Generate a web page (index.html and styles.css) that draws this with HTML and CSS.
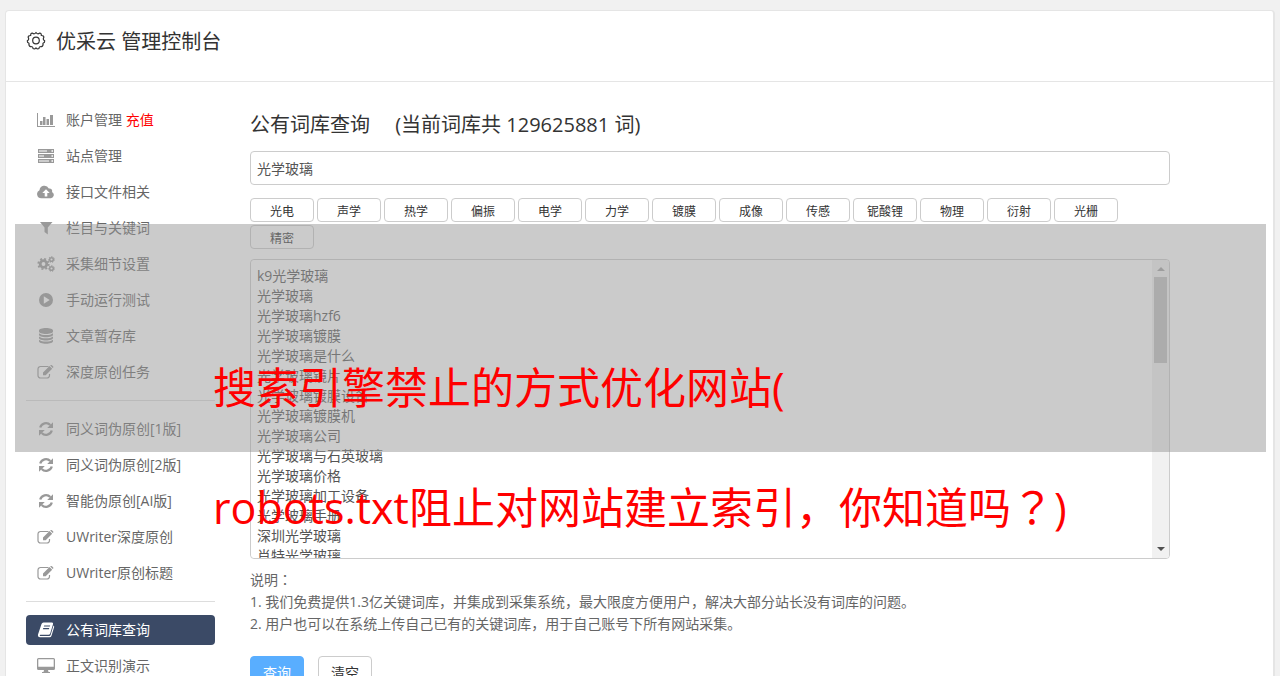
FILE: index.html
```html
<!DOCTYPE html>
<html lang="zh-CN">

<head>
    <meta charset="UTF-8">
    <meta name="viewport" content="width=device-width, initial-scale=1.0">
    <title>优采云 管理控制台</title>
    <link rel="stylesheet" href="styles.css">
</head>

<body>
    <!-- 图标 -->
    <svg class="sprite" width="0" height="0">
        <symbol id="i-chart" viewBox="0 0 18 14">
            <path d="M0 0h1v13h17v1H0zM3 8h2.500v4H3zM6 4h2.500v8H6zM9.500 6H12v6H9.500zM13 2h3v10h-3z" />
        </symbol>
        <symbol id="i-server" viewBox="0 0 18 14">
            <path fill-rule="evenodd" d="M1 0h16v4H1zM1 5h16v4H1zM1 10h16v4H1zM2 1.500v1h8v-1zM2 6.500v1h5v-1zM2 11.500v1h10v-1zM14.500 1.300v1.400h1.500V1.300zM14.500 6.300v1.400h1.500V6.300zM14.500 11.300v1.400h1.500v-1.400z" />
        </symbol>
        <symbol id="i-cloud" viewBox="0 0 18 14">
            <path fill-rule="evenodd" d="M4.300 13.200A4.200 4.200 0 0 1 2.500 5.200 4.900 4.900 0 0 1 11.800 3.600 2.600 2.600 0 0 1 15 7a3.300 3.300 0 0 1-1 6.200zM9 4.200 5.300 8h2.400v3.600h2.600V8h2.400z" />
        </symbol>
        <symbol id="i-filter" viewBox="0 0 18 14">
            <path d="M3 1h12.500L10.800 6.500V13.500L7.500 11V6.500z" />
        </symbol>
        <symbol id="i-cogs" viewBox="0 0 18 16">
            <circle cx="6.500" cy="8" r="3.300" fill="none" stroke="currentColor" stroke-width="2.800" />
            <circle cx="6.500" cy="8" r="5.200" fill="none" stroke="currentColor" stroke-width="1.800" stroke-dasharray="2 2.084" />
            <circle cx="14.500" cy="3.500" r="1.800" fill="none" stroke="currentColor" stroke-width="1.500" />
            <circle cx="14.500" cy="3.500" r="2.900" fill="none" stroke="currentColor" stroke-width="1" stroke-dasharray="1.300 1.300" />
            <circle cx="14.500" cy="12.500" r="1.800" fill="none" stroke="currentColor" stroke-width="1.500" />
            <circle cx="14.500" cy="12.500" r="2.900" fill="none" stroke="currentColor" stroke-width="1" stroke-dasharray="1.300 1.300" />
        </symbol>
        <symbol id="i-play" viewBox="0 0 18 14">
            <path fill-rule="evenodd" d="M9 0a7 7 0 1 1 0 14A7 7 0 0 1 9 0zM6.800 3.300v7.400L12.700 7z" />
        </symbol>
        <symbol id="i-database" viewBox="0 0 18 16">
            <path d="M2 2.500C2 1 5 0 9 0s7 1 7 2.500v1C16 5 13 6 9 6S2 5 2 3.500zM2 5.200C3.500 6.500 6 7 9 7s5.500-.5 7-1.800v1.500C16 8.200 13 9.200 9 9.200S2 8.200 2 6.700zM2 8.500c1.500 1.300 4 1.800 7 1.800s5.500-.5 7-1.800V10c0 1.500-3 2.500-7 2.500S2 11.500 2 10zM2 11.800c1.500 1.300 4 1.800 7 1.800s5.500-.5 7-1.800v1.500c0 1.500-3 2.500-7 2.500s-7-1-7-2.500z" />
        </symbol>
        <symbol id="i-edit" viewBox="0 0 18 14">
            <path d="M11.500 1.500H3.500A2.500 2.500 0 0 0 1 4v6.500A2.500 2.500 0 0 0 3.500 13H10a2.500 2.500 0 0 0 2.500-2.500V9" fill="none" stroke="currentColor" stroke-width="1.200" />
            <path d="M6 7.500 12.500 1l2.700 2.700-6.500 6.500H6zM13.200.6l.6-.5q.6-.4 1.200.1l1.200 1.200q.5.6 0 1.200l-.5.500z" />
        </symbol>
        <symbol id="i-refresh" viewBox="0 0 18 14">
            <path d="M3.200 5.500A6 6 0 0 1 13.300 3M14.800 8.500A6 6 0 0 1 4.700 11" fill="none" stroke="currentColor" stroke-width="2.300" />
            <path d="M16 .3V6h-5.800zM2 13.700V8h5.800z" />
        </symbol>
        <symbol id="i-book" viewBox="0 0 18 15">
            <path fill-rule="evenodd" d="M6.500 0H15q1.500.2 1 1.800L13.200 11q-.5 1.200-1.800 1.200H3.300q-1 .3-.3 1.200h9.200q1 0 1.400-1l2.900-9.400q1 .5.600 1.700l-2.600 8.600q-.5 1.500-2 1.500H3Q.500 14.500 1 12L4.500 1.500Q5 .2 6.500 0zM7.200 3l-.4 1.100h6L13.200 3zM6.300 5.600l-.4 1.100h6l.4-1.100z" />
        </symbol>
        <symbol id="i-desktop" viewBox="0 0 18 16">
            <path fill-rule="evenodd" d="M1.500 0h15Q18 0 18 1.500v9q0 1.500-1.500 1.500H11l.5 2H13v1H5v-1h1.500L7 12H1.500Q0 12 0 10.500v-9Q0 0 1.500 0zM1.300 1.200v7.600h15.400V1.200z" />
        </symbol>
        <symbol id="i-gear" viewBox="0 0 20 20">
            <path d="M10 1.500q1.500 2.200 3.500.7 2-.3 1.800 2.300 2.700-.1 2.500 1.900-1.300 2.100.9 3.400.2 1.800-1.700 2.500.5 2.600-1.500 3.300-2.500-.4-2.500 2-1.700 1-3-.8-1.300 1.800-3 .8 0-2.400-2.500-2-2-.7-1.500-3.300-1.900-.7-1.700-2.500 2.200-1.300.9-3.400-.2-2 2.500-1.900-.2-2.600 1.800-2.300 2 1.500 3.500-.7z" fill="none" stroke="currentColor" stroke-width="1.200" stroke-linejoin="round" />
            <circle cx="10" cy="9.500" r="3.300" fill="none" stroke="currentColor" stroke-width="1.200" />
        </symbol>
    </svg>

    <div class="panel">
        <header class="panel-head">
            <svg class="gear"><use href="#i-gear" /></svg>
            <h1>优采云 管理控制台</h1>
        </header>

        <div class="panel-body">
            <nav class="menu">
                <a href="#"><svg><use href="#i-chart" /></svg><span>账户管理 <b>充值</b></span></a>
                <a href="#"><svg><use href="#i-server" /></svg>站点管理</a>
                <a href="#"><svg><use href="#i-cloud" /></svg>接口文件相关</a>
                <a href="#"><svg><use href="#i-filter" /></svg>栏目与关键词</a>
                <a href="#"><svg><use href="#i-cogs" /></svg>采集细节设置</a>
                <a href="#"><svg><use href="#i-play" /></svg>手动运行测试</a>
                <a href="#"><svg><use href="#i-database" /></svg>文章暂存库</a>
                <a href="#"><svg><use href="#i-edit" /></svg>深度原创任务</a>
                <hr>
                <a href="#"><svg><use href="#i-refresh" /></svg>同义词伪原创[1版]</a>
                <a href="#"><svg><use href="#i-refresh" /></svg>同义词伪原创[2版]</a>
                <a href="#"><svg><use href="#i-refresh" /></svg>智能伪原创[AI版]</a>
                <a href="#"><svg><use href="#i-edit" /></svg>UWriter深度原创</a>
                <a href="#"><svg><use href="#i-edit" /></svg>UWriter原创标题</a>
                <hr>
                <a href="#" class="active"><svg><use href="#i-book" /></svg>公有词库查询</a>
                <a href="#"><svg><use href="#i-desktop" /></svg>正文识别演示</a>
            </nav>

            <main class="content">
                <h2><label for="keyword">公有词库查询</label> <span>(当前词库共 129625881 词)</span></h2>
                <input id="keyword" class="keyword" type="text" value="光学玻璃">

                <div class="tags">
                    <button type="button">光电</button>
                    <button type="button">声学</button>
                    <button type="button">热学</button>
                    <button type="button">偏振</button>
                    <button type="button">电学</button>
                    <button type="button">力学</button>
                    <button type="button">镀膜</button>
                    <button type="button">成像</button>
                    <button type="button">传感</button>
                    <button type="button">铌酸锂</button>
                    <button type="button">物理</button>
                    <button type="button">衍射</button>
                    <button type="button">光栅</button>
                    <button type="button">精密</button>
                </div>

                <div class="result-box">
                    <textarea class="result" aria-label="查询结果">k9光学玻璃
光学玻璃
光学玻璃hzf6
光学玻璃镀膜
光学玻璃是什么
光学玻璃镜片
光学玻璃镀膜设备
光学玻璃镀膜机
光学玻璃公司
光学玻璃与石英玻璃
光学玻璃价格
光学玻璃加工设备
光学玻璃手册
深圳光学玻璃
肖特光学玻璃</textarea>
                    <div class="scrollbar" aria-hidden="true">
                        <i class="up"></i>
                        <div class="track"><div class="thumb"></div></div>
                        <i class="down"></i>
                    </div>
                </div>

                <div class="notes">
                    <p>说明<span class="mid" lang="zh-TW">：</span></p>
                    <p>1. 我们免费提供1.3亿关键词库，并集成到采集系统，最大限度方便用户，解决大部分站长没有词库的问题。</p>
                    <p>2. 用户也可以在系统上传自己已有的关键词库，用于自己账号下所有网站采集。</p>
                </div>

                <div class="actions">
                    <button type="button" class="primary">查询</button>
                    <button type="button">清空</button>
                </div>
            </main>
        </div>
    </div>

    <!-- 标题浮层 -->
    <div class="caption">
        <div>搜索引擎禁止的方式优化网站(</div>
        <div>robots.txt阻止对网站建立索引，你知道吗<span class="mid" lang="zh-TW">？</span>)</div>
    </div>
</body>

</html>
```
FILE: styles.css
```css
* {
    box-sizing: border-box;
}

body {
    margin: 0;
    padding: 10px 5px;
    background: #f1f1f1;
    color: #666;
    font: 14px/20px "Open Sans", "Noto Sans CJK SC", sans-serif;
}

button,
input,
textarea {
    font: inherit;
    color: #555;
    background: #fff;
    border: 1px solid #ccc;
    border-radius: 4px;
}

h1,
h2 {
    margin: 0;
    color: #333;
    font-size: 20px;
    font-weight: normal;
    line-height: 30px;
}

/* 居中的标点 */
.mid {
    font-family: "Noto Sans CJK TC", sans-serif;
    line-height: 1;
}

.sprite {
    position: absolute;
}

.panel {
    background: #fff;
    border: 1px solid #e5e5e5;
    border-right-width: 2px;
    border-radius: 4px;
}

.panel-head {
    display: flex;
    align-items: flex-start;
    gap: 10px;
    height: 71px;
    padding: 16px 20px 0;
    border-bottom: 1px solid #e5e5e5;
}

.gear {
    width: 20px;
    height: 20px;
    margin-top: 4px;
    color: #333;
}

.panel-body {
    display: grid;
    grid-template-columns: 189px 1fr;
    gap: 35px;
    padding: 23px 103px 23px 20px;
}

/* 左侧菜单 */
.menu {
    display: flex;
    flex-direction: column;
    gap: 6px;
}

.menu a {
    display: flex;
    align-items: center;
    gap: 11px;
    height: 30px;
    padding: 0 11px;
    border-radius: 4px;
    color: #666;
    text-decoration: none;
}

.menu svg {
    width: 18px;
    height: 16px;
    color: #999;
}

svg {
    fill: currentColor;
}

.menu b {
    color: #f00;
    font-weight: normal;
}

.menu hr {
    width: 100%;
    height: 1px;
    margin: 7px 0;
    border: 0;
    background: #ddd;
}

.menu .active {
    background: #3b4a66;
}

.menu .active,
.menu .active svg {
    color: #fff;
}

/* 右侧内容 */
.content {
    min-width: 0;
    padding-top: 5px;
}

.content h2 span {
    margin-left: 20px;
}

.keyword {
    display: block;
    width: 100%;
    height: 34px;
    margin-top: 11px;
    padding: 0 6px;
}

.tags {
    display: flex;
    flex-wrap: wrap;
    gap: 3px;
    margin-top: 13px;
}

.tags button {
    width: 64px;
    height: 24px;
    padding: 3px 0 0;
    color: #333;
    font-size: 12px;
}

.result-box {
    display: flex;
    height: 300px;
    margin-top: 10px;
    border: 1px solid #ccc;
    border-radius: 4px;
    overflow: hidden;
}

.result {
    flex: 1;
    padding: 6px 6px 0;
    border: 0;
    resize: none;
    overflow: hidden;
}

.scrollbar {
    display: flex;
    flex-direction: column;
    align-items: center;
    justify-content: space-between;
    width: 17px;
    padding: 7px 0;
    background: #f1f1f1;
}

.scrollbar .track {
    flex: 1;
    width: 13px;
    padding: 6px 0;
}

.scrollbar .thumb {
    height: 86px;
    background: #c1c1c1;
}

.scrollbar i {
    border: 4px solid transparent;
}

.scrollbar .up {
    border-top: 0;
    border-bottom-color: #a3a3a3;
}

.scrollbar .down {
    border-bottom: 0;
    border-top-color: #505050;
}

.notes {
    margin-top: 10px;
    line-height: 22px;
}

.notes p {
    margin: 0;
}

.actions {
    display: flex;
    gap: 14px;
    margin-top: 21px;
}

.actions button {
    width: 54px;
    height: 34px;
    padding: 0;
    color: #333;
}

.actions .primary {
    border-color: #59aeff;
    background: #59aeff;
    color: #fff;
}

/* 浮在页面上的标题 */
.caption {
    position: absolute;
    top: 224px;
    left: 15px;
    right: 14px;
    height: 228px;
    padding: 104px 0 0 198px;
    background: rgba(151, 151, 151, .5);
    color: #f00;
    font-size: 43px;
    line-height: 120px;
    white-space: nowrap;
}
```
